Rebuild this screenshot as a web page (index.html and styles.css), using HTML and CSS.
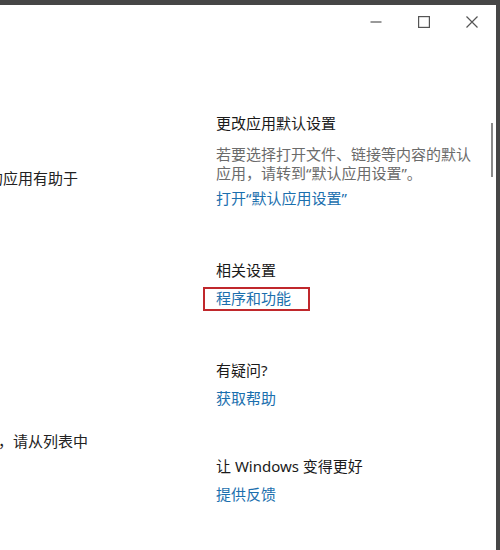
FILE: index.html
```html
<!DOCTYPE html>
<html lang="zh-CN">
<head>
<meta charset="utf-8">
<title>默认应用</title>
<link rel="stylesheet" href="styles.css">
</head>
<body>
<div class="window">
  <div class="titlebar">
    <div class="ctrl">
      <svg width="12" height="12" viewBox="0 0 12 12"><path d="M0.5 6h11" stroke="#555" stroke-width="1.2" fill="none"/></svg>
    </div>
    <div class="ctrl">
      <svg width="12" height="12" viewBox="0 0 12 12"><rect x="0.6" y="0.6" width="10.8" height="10.8" stroke="#555" stroke-width="1.2" fill="none"/></svg>
    </div>
    <div class="ctrl">
      <svg width="12" height="12" viewBox="0 0 12 12"><path d="M0.5 0.5l11 11M11.5 0.5l-11 11" stroke="#555" stroke-width="1.2" fill="none"/></svg>
    </div>
  </div>
  <div class="content">
    <div class="left">
      <p class="body-text first">的应用有助于</p>
      <p class="body-text second">，请从列表中</p>
    </div>
    <div class="right">
      <section class="group">
        <h2 class="heading">更改应用默认设置</h2>
        <p class="desc">若要选择打开文件、链接等内容的默认应用，请转到“默认应用设置”。</p>
        <a class="link">打开“默认应用设置”</a>
      </section>
      <section class="group">
        <h2 class="heading">相关设置</h2>
        <a class="link marked">程序和功能</a>
      </section>
      <section class="group third">
        <h2 class="heading">有疑问?</h2>
        <a class="link">获取帮助</a>
      </section>
      <section class="group last">
        <h2 class="heading">让 Windows 变得更好</h2>
        <a class="link">提供反馈</a>
      </section>
    </div>
    <div class="scroll-thumb"></div>
  </div>
</div>
</body>
</html>
```

FILE: styles.css
```css
html, body {
  margin: 0;
  padding: 0;
  background: #464646;
}
body {
  width: 500px;
  height: 550px;
  overflow: hidden;
  font-family: "Noto Sans", "Noto Sans CJK SC", sans-serif;
}
.window {
  margin-top: 5px;
  width: 496px;
  height: 545px;
  background: #ffffff;
  display: flex;
  flex-direction: column;
}
.titlebar {
  height: 34px;
  display: flex;
  justify-content: flex-end;
}
.ctrl {
  width: 48px;
  height: 34px;
  display: flex;
  align-items: center;
  justify-content: center;
}
.content {
  flex: 1;
  display: flex;
  position: relative;
}
.left {
  width: 216px;
  overflow: hidden;
  flex: none;
}
.body-text {
  margin: 0;
  font-size: 15px;
  line-height: 20px;
  color: #222;
  white-space: nowrap;
}
.first {
  margin-top: 129px;
  margin-left: -12px;
}
.second {
  margin-top: 243px;
  margin-left: -2px;
}
.right {
  flex: 1;
  padding-top: 74px;
  padding-right: 22px;
}
.group {
  margin-bottom: 52px;
}
.group.third {
  margin-bottom: 48px;
}
.group.last {
  margin-bottom: 0;
}
.heading {
  margin: 0 0 8px 0;
  font-size: 15px;
  line-height: 20px;
  font-weight: normal;
  color: #1a1a1a;
}
.desc {
  margin: 12px 0 5px 0;
  font-size: 15px;
  line-height: 19px;
  color: #6b6b6b;
}
.link {
  display: block;
  width: fit-content;
  font-size: 15px;
  line-height: 20px;
  color: #1b6fae;
  position: relative;
}
.marked::after {
  content: "";
  position: absolute;
  left: -13px;
  top: -1px;
  width: 103px;
  height: 20px;
  border: 2px solid #c0282c;
}
.scroll-thumb {
  position: absolute;
  right: 3px;
  top: 84px;
  width: 2px;
  height: 54px;
  background: #8a8a8a;
}
```
